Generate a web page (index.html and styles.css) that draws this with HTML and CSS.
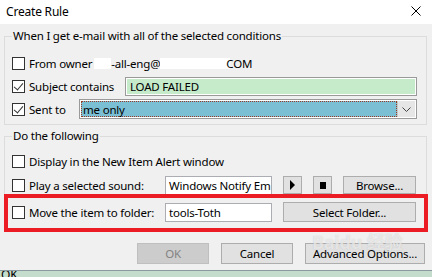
FILE: index.html
```html
<!DOCTYPE html>
<html lang="en">
<head>
    <meta charset="UTF-8">
    <title>Create Rule</title>
    <link rel="stylesheet" href="styles.css">
</head>
<body>
    <div class="window">
        <div class="titlebar">
            <span class="title">Create Rule</span>
            <svg class="close" width="10" height="10" viewBox="0 0 10 10">
                <path d="M0.5 0.5 L9.5 9.5 M9.5 0.5 L0.5 9.5" stroke="#000" stroke-width="1"/>
            </svg>
        </div>

        <div class="dialog">
            <!-- Conditions -->
            <fieldset class="group">
                <legend>When I get e-mail with all of the selected conditions</legend>
                <div class="row row-first">
                    <span class="check"></span>
                    <span class="label">From owner</span>
                    <span class="blank blank-a"></span>
                    <span class="label">-all-eng@</span>
                    <span class="blank blank-b"></span>
                    <span class="label">COM</span>
                </div>
                <div class="row">
                    <div class="lead lead-subject">
                        <span class="check checked"></span>
                        <span class="label">Subject contains</span>
                    </div>
                    <div class="field field-green">LOAD FAILED</div>
                </div>
                <div class="row">
                    <div class="lead lead-sent">
                        <span class="check checked"></span>
                        <span class="label">Sent to</span>
                    </div>
                    <div class="combo">
                        <div class="combo-value"><span>me only</span></div>
                        <div class="combo-btn">
                            <svg width="9" height="5" viewBox="0 0 9 5">
                                <path d="M0.5 0.5 L4.5 4.5 L8.5 0.5" fill="none" stroke="#444" stroke-width="1"/>
                            </svg>
                        </div>
                    </div>
                </div>
            </fieldset>

            <!-- Actions -->
            <fieldset class="group group-actions">
                <legend>Do the following</legend>
                <div class="row row-first">
                    <span class="check"></span>
                    <span class="label">Display in the New Item Alert window</span>
                </div>
                <div class="row row-sound">
                    <div class="lead lead-action">
                        <span class="check"></span>
                        <span class="label">Play a selected sound:</span>
                    </div>
                    <div class="field field-short">Windows Notify Em</div>
                    <button class="btn btn-icon"><span class="tri"></span></button>
                    <button class="btn btn-icon"><span class="sq"></span></button>
                    <button class="btn btn-browse">Browse...</button>
                </div>
                <div class="row row-move">
                    <div class="lead lead-action">
                        <span class="check"></span>
                        <span class="label">Move the item to folder:</span>
                    </div>
                    <div class="field field-short">tools-Toth</div>
                    <button class="btn btn-folder">Select Folder...</button>
                </div>
            </fieldset>

            <div class="buttons">
                <button class="btn btn-main" disabled>OK</button>
                <button class="btn btn-main">Cancel</button>
                <button class="btn btn-adv">Advanced Options...</button>
            </div>
        </div>

        <div class="taskstrip"><span>OK</span></div>

        <div class="highlight"></div>
        <div class="watermark">Baidu 经验</div>
    </div>
</body>
</html>
```

FILE: styles.css
```css
html, body {
    margin: 0;
    padding: 0;
}

body {
    width: 432px;
    height: 277px;
    overflow: hidden;
    font-family: "Noto Sans", "Noto Sans CJK SC", sans-serif;
    font-size: 11.5px;
    letter-spacing: -0.2px;
    color: #000;
    background: #f0f0f0;
}

.window {
    position: relative;
    height: 277px;
}

.titlebar {
    height: 24px;
    background: #fff;
    display: flex;
    align-items: center;
    justify-content: space-between;
    padding: 0 11px 2px 6px;
    box-sizing: border-box;
}

.title {
    font-size: 12px;
}

.dialog {
    background: #f0f0f0;
    height: 246px;
    padding-top: 4px;
    box-sizing: border-box;
}

.group {
    margin: 0 5px 0 4px;
    padding: 9px 7px 5px 7px;
    border: 1px solid #dcdcdc;
    min-width: 0;
}

.group legend {
    padding: 0 1px;
    margin-left: 0;
    line-height: 16px;
    height: 16px;
}

.group-actions {
    margin-top: 3px;
    padding-top: 7px;
    padding-bottom: 9px;
}

.row {
    display: flex;
    align-items: center;
    height: 20px;
    margin-top: 3px;
    white-space: nowrap;
}

.row-first {
    margin-top: 0;
}

.row-sound {
    margin-top: 5px;
    height: 18px;
}

.row-move {
    margin-top: 8px;
}

.lead {
    display: flex;
    align-items: center;
    flex: none;
}

.lead-subject { width: 113px; }
.lead-sent { width: 67px; }
.lead-action { width: 153px; }

.check {
    width: 11px;
    height: 11px;
    border: 1px solid #333;
    background: #fff;
    flex: none;
    margin-right: 4px;
    position: relative;
}

.checked::after {
    content: "";
    position: absolute;
    left: 3px;
    top: 0px;
    width: 4px;
    height: 8px;
    border: solid #333;
    border-width: 0 1px 1px 0;
    transform: rotate(40deg);
}

.blank {
    display: inline-block;
    height: 11px;
    background: #fff;
}

.blank-a { width: 17px; margin: 0 0 0 2px; }
.blank-b { width: 70px; margin-right: -4px; }

.field {
    height: 19px;
    line-height: 17px;
    border: 1px solid #abadb3;
    background: #fff;
    box-sizing: border-box;
    padding: 0 3px;
    overflow: hidden;
    white-space: nowrap;
    box-shadow: inset 0 0 0 1px #fff;
}

.field-green {
    width: 292px;
    background: #c6ebcb;
    border-color: #9a9a9a;
    padding-left: 4px;
}

.field-short {
    width: 107px;
    margin-right: 11px;
}

.combo {
    display: flex;
    width: 338px;
    height: 20px;
    border: 1px solid #9a9a9a;
    box-sizing: border-box;
    background: #fff;
    padding: 1px;
}

.combo-value {
    flex: 1;
    background: #7bbfd5;
    border: 1px dotted #9b3a22;
    display: flex;
    align-items: center;
    padding-left: 1px;
}

.combo-btn {
    width: 17px;
    background: #e6e6e6;
    border-left: 1px solid #c8c8c8;
    display: flex;
    align-items: center;
    justify-content: center;
}

.btn {
    font-family: inherit;
    font-size: 11.5px;
    letter-spacing: -0.2px;
    color: #000;
    background: #e1e1e1;
    border: 1px solid #adadad;
    padding: 0;
    margin: 0;
    box-sizing: border-box;
}

.btn-icon {
    width: 19px;
    height: 18px;
    margin-right: 11px;
    display: flex;
    align-items: center;
    justify-content: center;
}

.tri {
    width: 0;
    height: 0;
    border-left: 5px solid #000;
    border-top: 5px solid transparent;
    border-bottom: 5px solid transparent;
}

.sq {
    width: 6px;
    height: 7px;
    background: #000;
}

.btn-browse {
    width: 73px;
    height: 18px;
}

.btn-folder {
    width: 133px;
    height: 20px;
}

.buttons {
    display: flex;
    justify-content: flex-end;
    gap: 12px;
    padding-right: 7px;
    margin-top: 11px;
}

.btn-main {
    width: 72px;
    height: 21px;
}

.btn-main:disabled {
    background: #cccccc;
    border-color: #bfbfbf;
    color: #838383;
}

.btn-adv {
    width: 120px;
    height: 21px;
}

.taskstrip {
    height: 7px;
    border-top: 1px solid #8a9aa0;
    background: #c4dccb;
    font-size: 12px;
    line-height: 8px;
    overflow: hidden;
    padding-left: 1px;
    box-sizing: border-box;
}

.highlight {
    position: absolute;
    left: 4px;
    top: 194px;
    width: 424px;
    height: 38px;
    border: 4px solid #ec1c24;
    box-sizing: border-box;
}

.watermark {
    position: absolute;
    left: 312px;
    top: 228px;
    font-size: 18px;
    font-weight: bold;
    color: rgba(255, 255, 255, 0.6);
    text-shadow: 0 0 1px rgba(150, 150, 150, 0.5);
    pointer-events: none;
}
```
